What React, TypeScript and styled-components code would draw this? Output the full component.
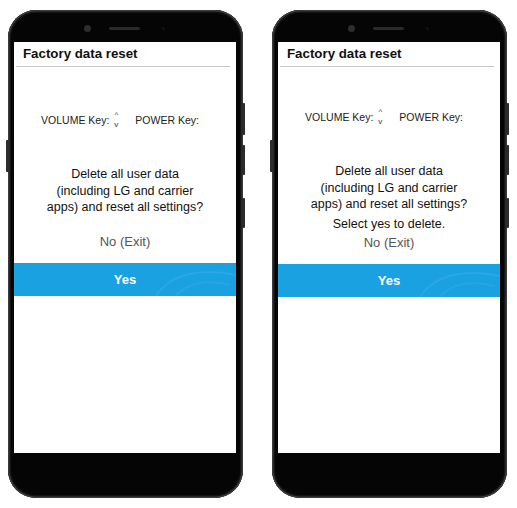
import React from "react";
import styled, { createGlobalStyle } from "styled-components";

const Global = createGlobalStyle`
  html, body { margin: 0; padding: 0; background: #ffffff; }
  body { font-family: "Liberation Sans", Arial, sans-serif; }
`;

const Page = styled.div`
  display: flex;
  gap: 29px;
  padding: 10px 0 0 8px;
`;

const Phone = styled.div`
  position: relative;
  width: 235px;
  height: 488px;
  box-sizing: border-box;
  border-radius: 28px;
  background: #050506;
  box-shadow: inset 0 0 0 1.5px #3c3c3e, inset 0 0 0 3px #141416;
  display: flex;
  flex-direction: column;
  padding: 0 7px 0 6px;
`;

const SideButton = styled.div<{ $side: "left" | "right"; $top: number; $h: number }>`
  position: absolute;
  top: ${(p) => p.$top}px;
  ${(p) => (p.$side === "right" ? "right: -2px;" : "left: -2px;")}
  width: 3px;
  height: ${(p) => p.$h}px;
  border-radius: 1px;
  background: #2c2c2f;
`;

const TopBezel = styled.div`
  height: 32px;
  flex: none;
  display: flex;
  align-items: center;
  padding: 4px 0 0 70px;
  box-sizing: border-box;
  gap: 18px;
`;

const Camera = styled.div`
  width: 7px;
  height: 7px;
  border-radius: 50%;
  background: #2e2e31;
`;

const Speaker = styled.div`
  width: 31px;
  height: 3px;
  border-radius: 2px;
  background: #2a2a2d;
`;

const Sensor = styled.div`
  width: 3px;
  height: 3px;
  border-radius: 50%;
  background: #141416;
  margin-left: 4px;
`;

const Screen = styled.div`
  flex: 1;
  background: #ffffff;
  display: flex;
  flex-direction: column;
  color: #111;
`;

const BottomBezel = styled.div`
  height: 45px;
  flex: none;
`;

const Header = styled.div`
  margin: 0 6px 0 2px;
  padding: 3px 0 0 7px;
  height: 25px;
  box-sizing: border-box;
  border-bottom: 1px solid #c9c9c9;
  font-size: 13.3px;
  line-height: 17px;
  font-weight: bold;
  color: #111;
`;

const KeyRow = styled.div<{ $top: number }>`
  margin-top: ${(p) => p.$top}px;
  display: flex;
  justify-content: center;
  align-items: center;
  padding-right: 10px;
  font-size: 10.5px;
  line-height: 14px;
  color: #222;
`;

const Arrows = styled.div`
  display: flex;
  flex-direction: column;
  align-items: center;
  margin: 0 17px 0 5px;
  font-size: 8px;
  line-height: 10px;
  color: #333;
`;

const Message = styled.div<{ $top: number }>`
  margin-top: ${(p) => p.$top}px;
  text-align: center;
  font-size: 12.5px;
  line-height: 16.5px;
  color: #111;
`;

const SelectLine = styled.div`
  margin-top: 3px;
  text-align: center;
  font-size: 12.5px;
  line-height: 16px;
  color: #111;
`;

const NoOption = styled.div<{ $top: number }>`
  margin-top: ${(p) => p.$top}px;
  text-align: center;
  font-size: 13px;
  line-height: 16px;
  color: #555;
`;

const YesBar = styled.div`
  margin-top: 13px;
  height: 33px;
  background: #1aa1e2;
  color: #ffffff;
  font-weight: bold;
  font-size: 13px;
  display: flex;
  align-items: center;
  justify-content: center;
  position: relative;
  overflow: hidden;
`;

const Swirl = styled.svg`
  position: absolute;
  right: 0;
  top: 0;
`;

type PhoneProps = { withSelect?: boolean };

function ResetPhone({ withSelect }: PhoneProps) {
  return (
    <Phone>
      <SideButton $side="right" $top={93} $h={32} />
      <SideButton $side="right" $top={135} $h={30} />
      <SideButton $side="right" $top={188} $h={30} />
      <SideButton $side="left" $top={130} $h={32} />
      <TopBezel>
        <Camera />
        <Speaker />
        <Sensor />
      </TopBezel>
      <Screen>
        <Header>Factory data reset</Header>
        <KeyRow $top={withSelect ? 40 : 43}>
          <span>VOLUME Key:</span>
          <Arrows>
            <span>^</span>
            <span>v</span>
          </Arrows>
          <span>POWER Key:</span>
        </KeyRow>
        <Message $top={36}>
          Delete all user data
          <br />
          (including LG and carrier
          <br />
          apps) and reset all settings?
        </Message>
        {withSelect && <SelectLine>Select yes to delete.</SelectLine>}
        <NoOption $top={withSelect ? 3 : 18}>No (Exit)</NoOption>
        <YesBar>
          <Swirl width="90" height="33" viewBox="0 0 90 33">
            <path d="M10 33 C 25 10, 55 5, 90 12" stroke="rgba(255,255,255,0.07)" strokeWidth="2" fill="none" />
            <path d="M30 33 C 40 20, 60 16, 85 22" stroke="rgba(255,255,255,0.06)" strokeWidth="2" fill="none" />
          </Swirl>
          Yes
        </YesBar>
      </Screen>
      <BottomBezel />
    </Phone>
  );
}

export default function App() {
  return (
    <>
      <Global />
      <Page>
        <ResetPhone />
        <ResetPhone withSelect />
      </Page>
    </>
  );
}
